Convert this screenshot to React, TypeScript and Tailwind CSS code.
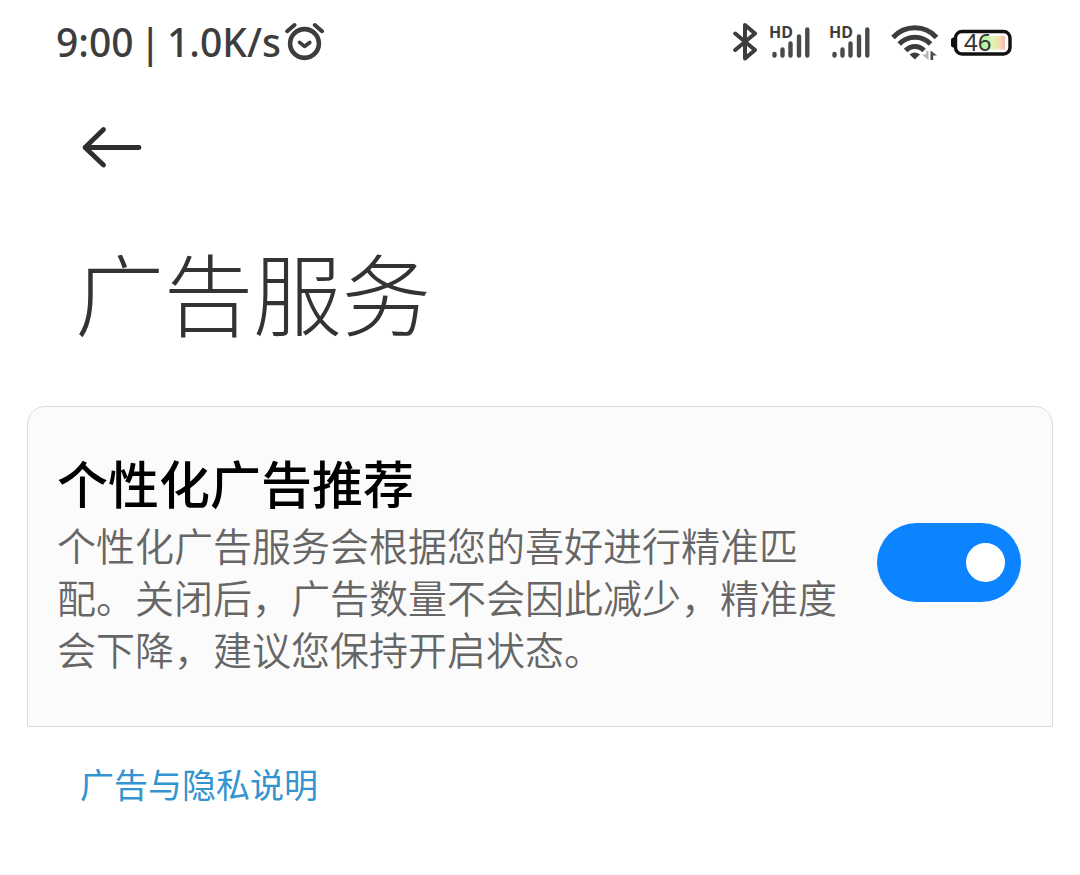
import { useState } from "react";

function AlarmIcon() {
  return (
    <svg className="h-10 w-10" viewBox="0 0 40 40" fill="none" stroke="#3d3d3d" strokeLinecap="round" strokeLinejoin="round" aria-hidden="true">
      <circle cx="19.5" cy="21.5" r="14.4" strokeWidth="4.6" />
      <path d="M14.6 20.4l4.9 4 5.200-4" strokeWidth="3.8" />
      <path d="M2.200 9.200L9.500 3M37 9.200L29.800 3" strokeWidth="4" />
    </svg>
  );
}

function BluetoothIcon() {
  return (
    <svg className="h-10 w-6" viewBox="0 0 24 40" fill="none" stroke="#3d3d3d" strokeWidth="4" strokeLinecap="round" strokeLinejoin="round" aria-hidden="true">
      <path d="M2.200 11.500L22 28L12 36.500V3L22 11.500L2.200 28" />
    </svg>
  );
}

function SignalIcon() {
  return (
    <div className="relative h-10 w-[42px]">
      <svg className="h-10 w-[42px]" viewBox="0 0 42 40" stroke="#4a4a4a" strokeWidth="4.4" strokeLinecap="round" aria-hidden="true">
        <path d="M5.500 33.500V32M13.500 33.500V27.500M21.500 33.500V21.500M30 33.500V14.500M38.300 33.500V7.500" />
      </svg>
      <span className="absolute left-0 top-0.5 text-base font-bold leading-4">HD</span>
    </div>
  );
}

function WifiIcon() {
  return (
    <svg className="h-10 w-12" viewBox="0 0 48 40" fill="none" aria-hidden="true">
      <g stroke="#3d3d3d" strokeWidth="5">
        <path d="M2 15.500C14 2.600 34 2.600 45.500 15.500" />
        <path d="M8.200 22C17 13 31 13 39.500 22" />
        <path d="M14.600 28.500C20 23 28 23 33 28.500" />
      </g>
      <path d="M18.600 32.500Q23.800 28.500 29 32.500L23.800 37.500Z" fill="#3d3d3d" />
      <path d="M37.500 29V38L31 32.500H35.200V29Z" fill="#b5b5b5" />
      <path d="M39.500 38V28.500L46 33.500H42.200V38Z" fill="#4a4a4a" />
    </svg>
  );
}

function Battery() {
  return (
    <div className="relative h-[27px] w-[62px]">
      <svg className="h-[27px] w-[62px]" viewBox="0 0 62 27" aria-hidden="true">
        <defs>
          <linearGradient id="charge">
            <stop offset="0" stopColor="#a9f5a0" />
            <stop offset="0.45" stopColor="#dcf5b0" />
            <stop offset="0.75" stopColor="#f6dcae" />
            <stop offset="1" stopColor="#f7b9b0" />
          </linearGradient>
        </defs>
        <path d="M5 8.500H3.500Q1 8.500 1 11V16Q1 18.500 3.500 18.500H5Z" fill="#111" />
        <rect x="5.500" y="2.500" width="54.500" height="22.500" rx="6.500" fill="#fff" stroke="#111" strokeWidth="3.400" />
        <rect x="32" y="7" width="23" height="13.500" fill="url(#charge)" />
      </svg>
      <span className="absolute left-3.5 top-0 text-2xl leading-[26px] text-[#333]">46</span>
    </div>
  );
}

function StatusBar() {
  return (
    <div className="flex h-[84px] items-center justify-between pl-14 pr-[68px] font-['Noto_Sans','Noto_Sans_CJK_SC',sans-serif] text-[#3d3d3d]">
      <div className="flex items-center">
        <div className="flex gap-1.5 text-[39px] font-medium leading-[52px]">
          <span>9:00</span>
          <span>|</span>
          <span>1.0K/s</span>
        </div>
        <div className="ml-1">
          <AlarmIcon />
        </div>
      </div>
      <div className="flex items-center">
        <BluetoothIcon />
        <div className="ml-3 flex gap-[18px]">
          <SignalIcon />
          <SignalIcon />
        </div>
        <div className="ml-5 flex items-center gap-[11px]">
          <WifiIcon />
          <Battery />
        </div>
      </div>
    </div>
  );
}

export default function App() {
  const [enabled, setEnabled] = useState(true);

  return (
    <div lang="zh-CN" className="min-h-screen bg-white font-['Noto_Sans_CJK_SC',sans-serif]">
      <StatusBar />
      <header className="px-[75px]">
        <button type="button" aria-label="返回" className="ml-1 mt-10 block">
          <svg className="h-12 w-16" viewBox="0 0 64 48" fill="none" stroke="#2e2e2e" strokeWidth="4.800" strokeLinecap="round" strokeLinejoin="round" aria-hidden="true">
            <path d="M60 23.500H6M24.500 5.500L6 23.500L24.500 41" />
          </svg>
        </button>
        <h1 className="mt-[54px] text-[89px] font-light leading-[130px] text-[#333]">广告服务</h1>
      </header>
      <main>
        <section className="mx-[27px] mt-[50px] flex items-center gap-8 rounded-t-[18px] border border-[#dcdcdc] bg-[#fbfbfb] pb-[52px] pl-[29px] pr-[31px] pt-[39px]">
          <div className="flex-1">
            <h2 className="text-[51px] font-medium leading-[72px] text-black">
              <label htmlFor="personalized">个性化广告推荐</label>
            </h2>
            <p id="personalized-note" className="text-[39px] font-[350] leading-[52px] text-[#666]">
              个性化广告服务会根据您的喜好进行精准匹配。关闭后，广告数量不会因此减少，精准度会下降，建议您保持开启状态。
            </p>
          </div>
          <input
            id="personalized"
            type="checkbox"
            role="switch"
            aria-describedby="personalized-note"
            checked={enabled}
            onChange={(e) => setEnabled(e.target.checked)}
            className="mt-1 flex h-[79px] w-36 shrink-0 cursor-pointer appearance-none items-center rounded-full bg-[#c8c8c8] px-4 before:size-[39px] before:rounded-full before:bg-white checked:justify-end checked:bg-[#0d84ff]"
          />
        </section>
        <a href="#privacy" className="mx-20 mt-8 inline-block text-[34px] leading-[50px] text-[#3394cf]">
          广告与隐私说明
        </a>
      </main>
    </div>
  );
}
